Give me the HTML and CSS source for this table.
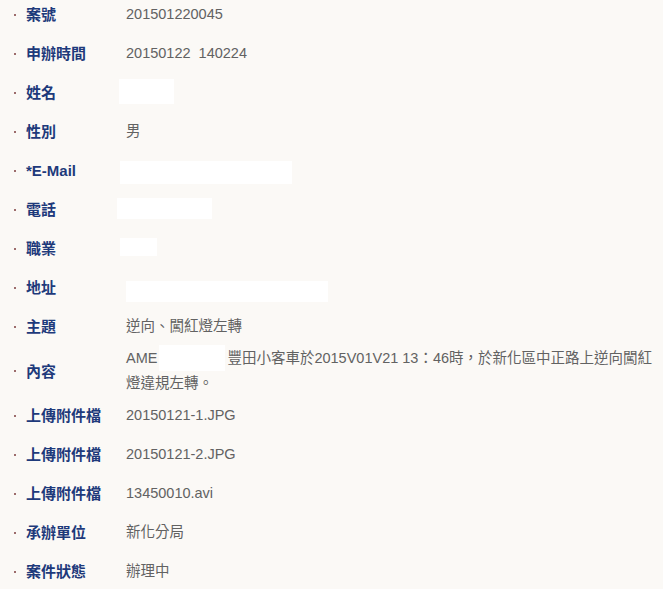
FILE: index.html
```html
<!DOCTYPE html>
<html lang="zh-Hant">
<head>
  <meta charset="UTF-8" />
  <meta name="viewport" content="width=device-width, initial-scale=1.0" />
  <title>案件查詢</title>
  <link rel="stylesheet" href="styles.css">
</head>
<body>
  <ul class="detail">
    <li><span class="label">案號</span><span class="value">201501220045</span></li>
    <li><span class="label">申辦時間</span><span class="value">20150122&nbsp; 140224</span></li>
    <li><span class="label">姓名</span><span class="value"><span class="mask mask-name"></span></span></li>
    <li><span class="label">性別</span><span class="value">男</span></li>
    <li><span class="label">*E-Mail</span><span class="value"><span class="mask mask-mail"></span></span></li>
    <li><span class="label">電話</span><span class="value"><span class="mask mask-tel"></span></span></li>
    <li><span class="label">職業</span><span class="value"><span class="mask mask-job"></span></span></li>
    <li><span class="label">地址</span><span class="value"><span class="mask mask-addr"></span></span></li>
    <li><span class="label">主題</span><span class="value">逆向、闖紅燈左轉</span></li>
    <li><span class="label">內容</span><p class="value">AME<span class="mask mask-text"></span>豐田小客車於2015V01V21 13：46時，於新化區中正路上逆向闖紅燈違規左轉。</p></li>
    <li><span class="label">上傳附件檔</span><span class="value">20150121-1.JPG</span></li>
    <li><span class="label">上傳附件檔</span><span class="value">20150121-2.JPG</span></li>
    <li><span class="label">上傳附件檔</span><span class="value">13450010.avi</span></li>
    <li><span class="label">承辦單位</span><span class="value">新化分局</span></li>
    <li><span class="label">案件狀態</span><span class="value">辦理中</span></li>
  </ul>
</body>
</html>
```

FILE: styles.css
```css
:root {
  --bg: #fbf9f6;
  --label: #1e3a7b;
  --text: #626262;
  --dot: #9c6c6c;
}
* {
  margin: 0;
  padding: 0;
  box-sizing: border-box;
}
body {
  background: var(--bg);
  font-family: 'Liberation Sans', 'Noto Sans CJK TC', sans-serif;
  color: var(--text);
}

.detail {
  list-style: none;
  margin-top: -5px;
  width: 660px;
}

.detail li {
  display: grid;
  grid-template-columns: 26px 100px 1fr;
  align-items: center;
  min-height: 39px;
  line-height: 25px;
}

.detail li::before {
  content: "";
  width: 2px;
  height: 2px;
  margin-left: 14px;
  background: var(--dot);
}

.label {
  font-size: 15px;
  font-weight: bold;
  color: var(--label);
}

.value {
  font-size: 14.5px;
}

/* 個資遮蔽 */
.mask {
  display: inline-block;
  vertical-align: middle;
  background: #fff;
}
.mask-name { width: 55px; height: 25px; margin-left: -7px; margin-top: -3px; }
.mask-mail { width: 172px; height: 23px; margin-left: -6px; margin-top: 3px; }
.mask-tel  { width: 95px; height: 21px; margin-left: -9px; margin-top: -3px; }
.mask-job  { width: 37px; height: 18px; margin-left: -6px; margin-top: -4px; }
.mask-addr { width: 202px; height: 21px; margin-top: 7px; }
.mask-text { width: 66px; height: 26px; margin: -1px 2px 0; vertical-align: top; }
```
